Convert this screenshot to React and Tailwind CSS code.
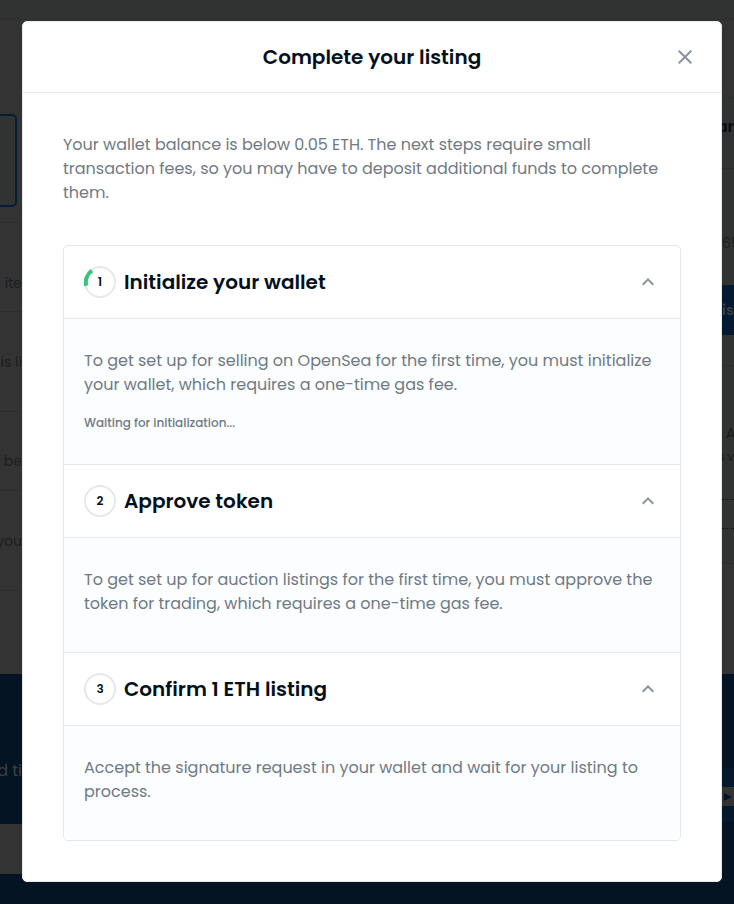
import React from "react";

const steps = [
  {
    title: "Initialize your wallet",
    body: "To get set up for selling on OpenSea for the first time, you must initialize your wallet, which requires a one-time gas fee.",
    status: "Waiting for initialization...",
    active: true,
  },
  {
    title: "Approve token",
    body: "To get set up for auction listings for the first time, you must approve the token for trading, which requires a one-time gas fee.",
  },
  {
    title: "Confirm 1 ETH listing",
    body: "Accept the signature request in your wallet and wait for your listing to process.",
  },
];

function StepBadge({ number, active }) {
  return (
    <span className="grid size-8 shrink-0 place-items-center">
      <svg viewBox="0 0 32 32" className="col-start-1 row-start-1 size-8" fill="none" aria-hidden="true">
        <circle cx="16" cy="16" r="15" stroke="#e5e8eb" strokeWidth="2" />
        {active && <path d="M2.3 19.8A14 14 0 0 1 8 4.6" stroke="#34c77b" strokeWidth="4" />}
      </svg>
      <span className="col-start-1 row-start-1 text-xs leading-4 font-semibold">{number}</span>
    </span>
  );
}

function Step({ number, step }) {
  const [open, setOpen] = React.useState(true);
  const panelId = `step-${number}`;
  return (
    <section className="border-b border-[#e5e8eb] last:border-b-0">
      <button
        type="button"
        aria-expanded={open}
        aria-controls={panelId}
        onClick={() => setOpen(!open)}
        className="flex h-[72px] w-full items-center gap-2 px-5 text-left text-[#04111d]"
      >
        <StepBadge number={number} active={step.active} />
        <span className="flex-1 text-xl leading-8 font-semibold">{step.title}</span>
        <svg viewBox="0 0 24 24" className="size-6 text-[#8a939b]" fill="currentColor" aria-hidden="true">
          <path d="M12 8l-6 6 1.41 1.41L12 10.83l4.59 4.58L18 14z" />
        </svg>
      </button>
      {open && (
        <div id={panelId} className="border-t border-[#e5e8eb] bg-[#fbfdff] px-5 pt-[30px] pb-9 text-[#707a83]">
          <p className="text-base leading-6">{step.body}</p>
          {step.status && <p className="mt-4 -mb-1 text-xs leading-[19px] font-medium">{step.status}</p>}
        </div>
      )}
    </section>
  );
}

function ListingPage() {
  return (
    <div aria-hidden="true" className="flex min-h-screen bg-[#333333] text-sm leading-6 text-[#1c1e20]">
      <div className="flex w-[22px] flex-col overflow-hidden whitespace-nowrap">
        <div className="h-5 border-b border-[#2d2f2f] bg-[#303332]" />
        <div className="mt-[94px] mr-[5px] h-[93px] rounded-r-[5px] border-2 border-l-0 border-[#051c35] bg-[#303332]" />
        <div className="mt-[15px] flex h-[90px] items-center justify-end border-y border-[#2d2d2e] pt-8">s ite</div>
        <div className="flex h-[100px] items-center justify-end border-b border-[#2d2d2e]">is li</div>
        <div className="flex h-[79px] items-center justify-end border-b border-[#2d2d2e] pt-5">r be</div>
        <div className="flex h-[100px] items-center justify-end border-b border-[#2d2d2e]">you</div>
        <div className="h-[83px]" />
        <div className="flex h-[150px] items-center justify-end bg-[#041423] pt-11 text-base text-[#3c4043]">d ti</div>
        <div className="h-[50px]" />
        <div className="flex-1 bg-[#041423]" />
      </div>
      <div className="flex flex-1 flex-col">
        <div className="h-5 border-b border-[#2d2f2f] bg-[#303332]" />
        <div className="h-[854px]" />
        <div className="flex-1 bg-[#041423]" />
      </div>
      <div className="flex w-3 flex-col overflow-hidden whitespace-nowrap">
        <div className="h-5 border-b border-[#2d2f2f] bg-[#303332]" />
        <div className="h-[78px] border-b border-[#2d2f2f]" />
        <div className="flex h-[71px] items-center justify-end border-b border-[#2b2d2c] bg-[#303332] pb-3 text-base font-semibold text-[#0b0e11]">
          ar
        </div>
        <div className="flex h-[116px] items-center bg-[#303332] pt-8">65</div>
        <div className="flex h-[50px] items-center bg-[#041a30] font-semibold text-[#3c4043]">is</div>
        <div className="h-[31px] border-b border-[#2b2d2c] bg-[#303332]" />
        <div className="h-[134px] border-b border-dotted border-[#111416] bg-[#303332] pt-[55px] text-[#17191b]">
          <div className="pl-1">A</div>
          <div className="flex justify-end text-xs leading-6">s v</div>
        </div>
        <div className="h-[29px] border-b border-dotted border-[#111416] bg-[#303332]" />
        <div className="h-[35px] border-b border-[#2b2d2c] bg-[#303332]" />
        <div className="h-[110px]" />
        <div className="h-[94px] bg-[#041423]" />
        <div className="h-[19px] bg-[#041a2c]" />
        <div className="flex h-[19px] items-center bg-[#333333] pl-[2px]">
          <svg viewBox="0 0 8 8" className="size-2" fill="#041423">
            <path d="M0 0l8 4-8 4z" />
          </svg>
        </div>
        <div className="h-4 bg-[#041a2c]" />
        <div className="flex-1 bg-[#041423]" />
      </div>
    </div>
  );
}

export default function App() {
  return (
    <div className="font-['Poppins','Inter',sans-serif]">
      <ListingPage />
      <div className="fixed inset-0 flex items-start justify-center overflow-auto pt-[21px] pr-3 pl-[22px]">
        <div
          role="dialog"
          aria-modal="true"
          aria-labelledby="dialog-title"
          className="w-full max-w-[700px] rounded-[5px] border border-[#e5e8eb] bg-white"
        >
          <header className="grid grid-cols-[1fr_auto_1fr] items-center border-b border-[#e5e8eb] px-6 py-5">
            <h1 id="dialog-title" className="col-start-2 text-xl leading-[30px] font-semibold text-[#04111d]">
              Complete your listing
            </h1>
            <button type="button" aria-label="Close" className="justify-self-end text-[#8a939b]">
              <svg viewBox="0 0 24 24" className="size-6" fill="currentColor" aria-hidden="true">
                <path d="M19 6.41L17.59 5 12 10.59 6.41 5 5 6.41 10.59 12 5 17.59 6.41 19 12 13.41 17.59 19 19 17.59 13.41 12z" />
              </svg>
            </button>
          </header>
          <div className="p-10">
            <p className="text-base leading-6 text-[#707a83]">
              Your wallet balance is below 0.05 ETH. The next steps require small transaction fees, so you may have to
              deposit additional funds to complete them.
            </p>
            <div className="mt-10 overflow-hidden rounded-[5px] border border-[#e5e8eb]">
              {steps.map((step, i) => (
                <Step key={step.title} number={i + 1} step={step} />
              ))}
            </div>
          </div>
        </div>
      </div>
    </div>
  );
}
